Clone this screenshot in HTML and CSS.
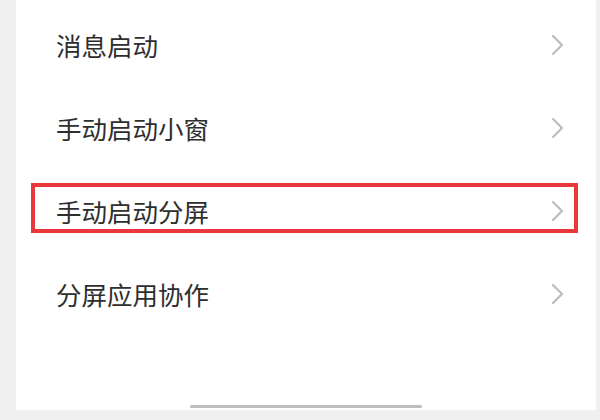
FILE: index.html
```html
<!DOCTYPE html>
<html lang="zh-CN">
<head>
<meta charset="utf-8">
<link rel="stylesheet" href="styles.css">
</head>
<body>
<div class="card">
  <div class="row"><span class="label">消息启动</span><svg class="chev" viewBox="0 0 14 22"><path d="M2 2 L11 11 L2 20"/></svg></div>
  <div class="row"><span class="label">手动启动小窗</span><svg class="chev" viewBox="0 0 14 22"><path d="M2 2 L11 11 L2 20"/></svg></div>
  <div class="row"><span class="label">手动启动分屏</span><svg class="chev" viewBox="0 0 14 22"><path d="M2 2 L11 11 L2 20"/></svg><div class="mark"></div></div>
  <div class="row"><span class="label">分屏应用协作</span><svg class="chev" viewBox="0 0 14 22"><path d="M2 2 L11 11 L2 20"/></svg></div>
</div>
<div class="home"></div>
</body>
</html>
```
FILE: styles.css
```css
html, body {
  margin: 0;
  padding: 0;
  background: #efefef;
  width: 600px;
  height: 420px;
  overflow: hidden;
  font-family: "Noto Sans CJK SC", "Noto Sans", sans-serif;
}
body { position: relative; }
.card {
  margin-left: 16px;
  width: 580px;
  height: 410px;
  background: #ffffff;
  padding-top: 3px;
  box-sizing: border-box;
}
.row {
  position: relative;
  height: 83px;
  display: flex;
  align-items: center;
  justify-content: space-between;
  padding: 0 31px 0 40px;
}
.label {
  font-size: 25.5px;
  font-weight: 400;
  color: #2e2e2e;
  line-height: 1;
}
.chev {
  width: 14px;
  height: 22px;
  fill: none;
  stroke: #bdbdbd;
  stroke-width: 2.3;
  stroke-linecap: round;
  stroke-linejoin: round;
}
.mark {
  position: absolute;
  left: 15px;
  top: 14px;
  width: 547px;
  height: 50px;
  box-sizing: border-box;
  border: 4px solid #e8373d;
}
.home {
  position: absolute;
  left: 190px;
  top: 405px;
  width: 232px;
  height: 3px;
  border-radius: 2px;
  background: #bdbdbd;
}
```
